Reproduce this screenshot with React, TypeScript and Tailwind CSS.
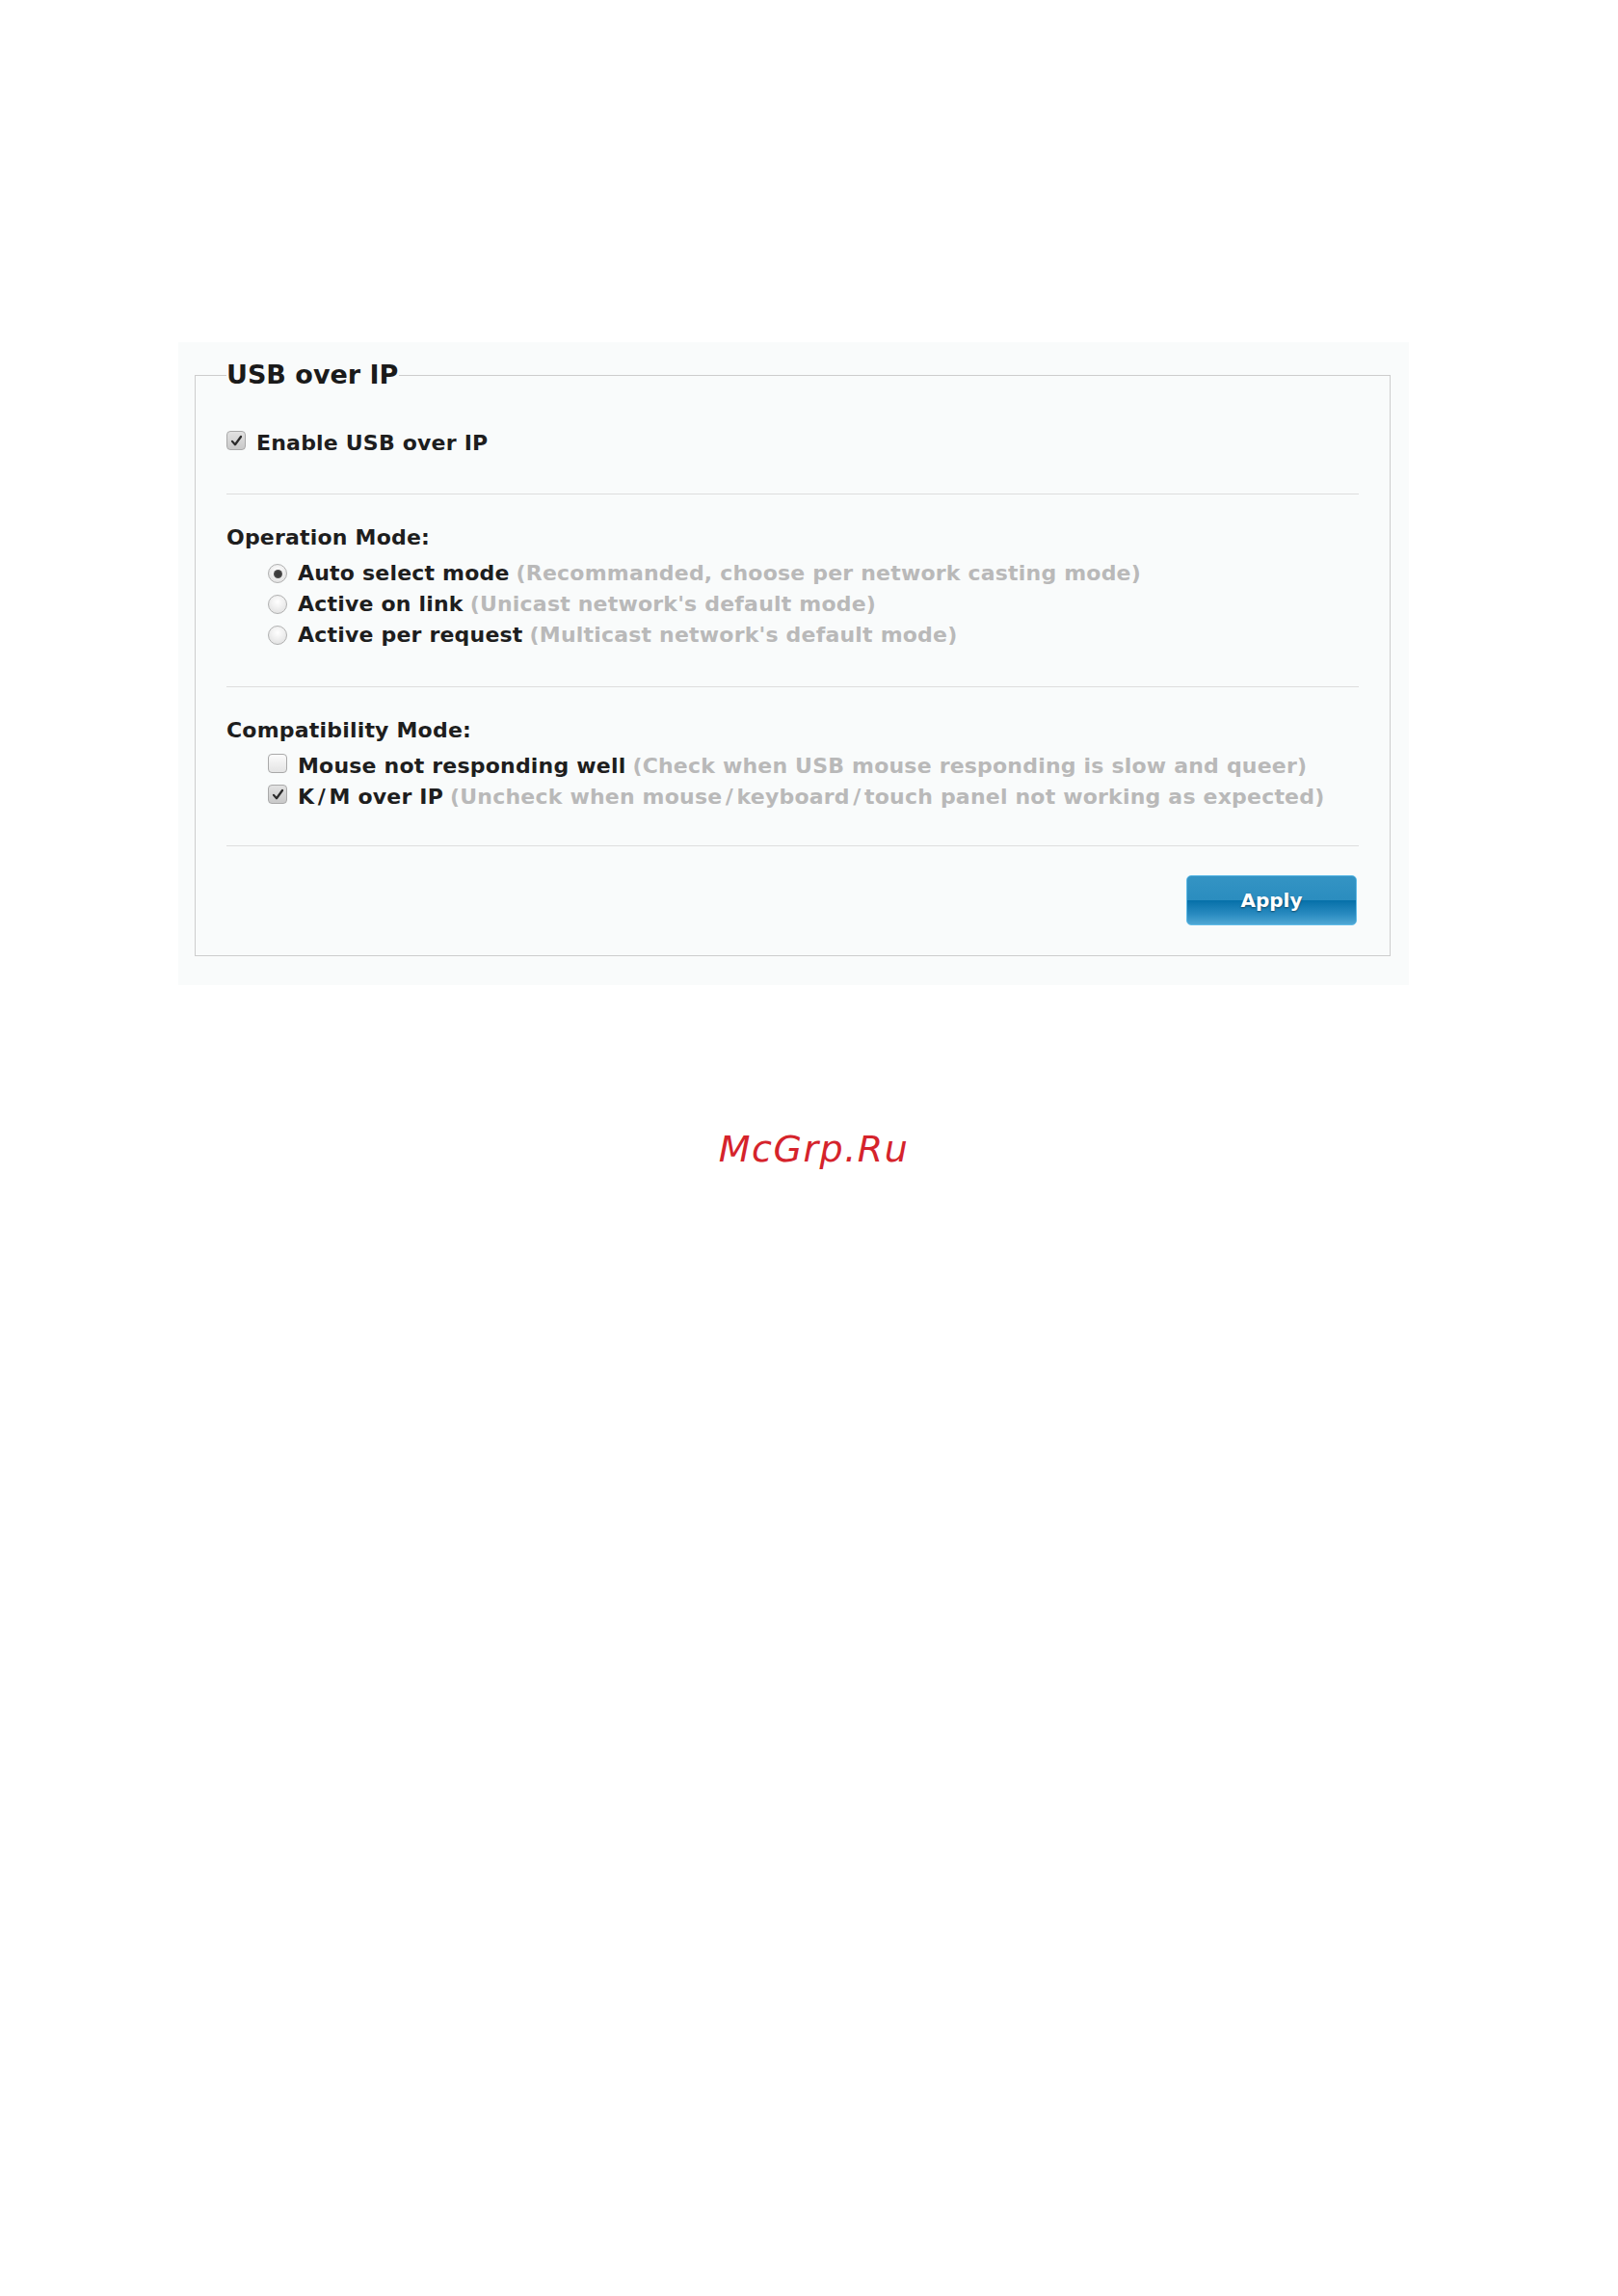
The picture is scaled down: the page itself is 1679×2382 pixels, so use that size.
import { ReactNode } from "react";

const font = "font-['DejaVu_Sans',Verdana,sans-serif]";

// Verdana's slash is much wider than DejaVu's, so pad it a little
function Text({ children }: { children: string }) {
  const parts = children.split("/");
  return (
    <>
      {parts.map((part, i) => (
        <span key={i}>
          {i > 0 && <span className="mx-[3.5px]">/</span>}
          {part}
        </span>
      ))}
    </>
  );
}

function CheckBox({ checked }: { checked?: boolean }) {
  return (
    <span
      className={
        "mb-[6px] flex h-5 w-5 shrink-0 items-center justify-center rounded-[4px] border border-[#a9a9a9] " +
        (checked
          ? "bg-[linear-gradient(to_bottom,#e2e2e2,#c9c9c9)]"
          : "bg-[linear-gradient(to_bottom,#fbfbfb,#e4e4e4)]")
      }
    >
      {checked && (
        <svg viewBox="0 0 20 20" className="h-[15px] w-[15px]">
          <path
            d="M4 10.5 L8 15 L16 4"
            fill="none"
            stroke="#2b2b2b"
            strokeWidth="3"
            strokeLinecap="round"
            strokeLinejoin="round"
          />
        </svg>
      )}
    </span>
  );
}

function Radio({ checked }: { checked?: boolean }) {
  return (
    <span className="flex h-5 w-5 shrink-0 items-center justify-center rounded-full border border-[#b0b0b0] bg-[radial-gradient(circle_at_50%_35%,#ffffff,#dcdcdc)]">
      {checked && (
        <span className="h-[9px] w-[9px] rounded-full bg-[radial-gradient(circle,#3c3c3c_40%,#6a6a6a)]" />
      )}
    </span>
  );
}

function Option({
  control,
  label,
  hint,
}: {
  control: ReactNode;
  label: string;
  hint: string;
}) {
  return (
    <div className="flex h-8 items-center whitespace-nowrap pl-[43px]">
      {control}
      <span className="ml-[11px] text-[#1e1e1e]">
        <Text>{label}</Text>
      </span>
      <span className="ml-[7px] text-[#b9b9b9]">
        <Text>{hint}</Text>
      </span>
    </div>
  );
}

export default function App() {
  return (
    <div className={`min-h-[2382px] w-full bg-white ${font}`}>
      <div className="h-[355px]" />
      <div className="ml-[185px] w-[1277px] bg-[#f9fbfb] pt-[17px] pr-[19px] pb-[30px] pl-[17px]">
        <fieldset className="border border-[#cdcdcd] px-[32px] pt-[38px] pb-[31px]">
          <legend className="p-0 pr-[1px] text-[27px] font-bold leading-[34px] text-[#1a1a1a]">
            USB over IP
          </legend>

          <div className="text-[22px] font-bold leading-8 tracking-[0.2px]">
            <div className="flex h-8 items-center whitespace-nowrap">
              <CheckBox checked />
              <span className="ml-[11px] text-[#1e1e1e]">Enable USB over IP</span>
            </div>

            <div className="mt-[36px] h-px bg-[#dedede]" />

            <div className="mt-[29px] text-[#1e1e1e]">Operation Mode:</div>
            <div className="mt-[5px]">
              <Option
                control={<Radio checked />}
                label="Auto select mode"
                hint="(Recommanded, choose per network casting mode)"
              />
              <Option
                control={<Radio />}
                label="Active on link"
                hint="(Unicast network's default mode)"
              />
              <Option
                control={<Radio />}
                label="Active per request"
                hint="(Multicast network's default mode)"
              />
            </div>

            <div className="mt-[37px] h-px bg-[#dedede]" />

            <div className="mt-[29px] text-[#1e1e1e]">Compatibility Mode:</div>
            <div className="mt-[5px]">
              <Option
                control={<CheckBox />}
                label="Mouse not responding well"
                hint="(Check when USB mouse responding is slow and queer)"
              />
              <Option
                control={<CheckBox checked />}
                label="K/M over IP"
                hint="(Uncheck when mouse/keyboard/touch panel not working as expected)"
              />
            </div>

            <div className="mt-[34px] h-px bg-[#dedede]" />

            <div className="mt-[30px] flex justify-end pr-[2px]">
              <button
                type="button"
                className="flex h-[52px] w-[177px] items-center justify-center rounded-[5px] border border-[#62bce8] bg-[linear-gradient(to_bottom,#3494c4_0%,#2b8dbf_49%,#0670a9_51%,#2b8cc1_80%,#4fa7d4_100%)] text-[20px] font-bold tracking-normal text-white [text-shadow:0_1px_2px_rgba(0,0,0,0.45)]"
              >
                Apply
              </button>
            </div>
          </div>
        </fieldset>
      </div>

      <div className="mt-[147px] flex justify-center pl-[10px]">
        <span className="text-[38px] italic leading-[46px] tracking-[1.5px] text-[#d5232b]">
          McGrp.Ru
        </span>
      </div>
    </div>
  );
}
